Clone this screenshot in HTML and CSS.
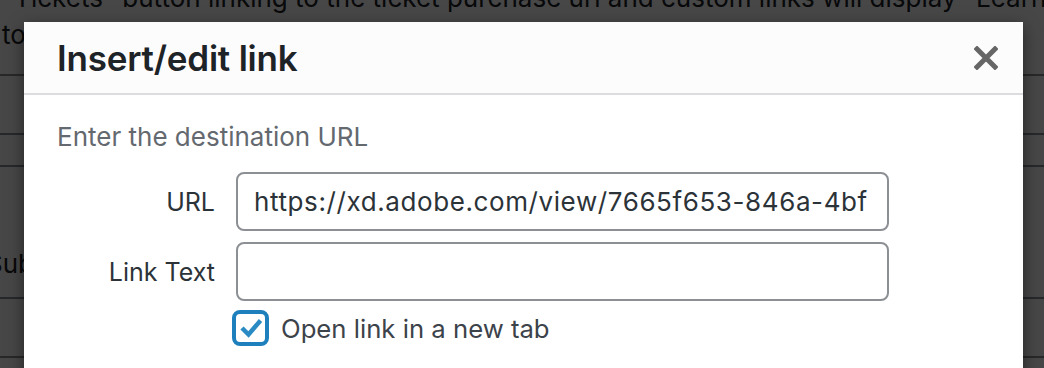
FILE: index.html
```html
<!DOCTYPE html>
<html lang="en">
<head>
    <meta charset="UTF-8">
    <meta name="viewport" content="width=device-width, initial-scale=1.0">
    <title>Insert/edit link</title>
    <link rel="stylesheet" href="styles.css">
</head>
<body>
    <div class="page">
        <div class="page-row first">
            <p class="page-text">"Tickets" button linking to the ticket purchase url and custom links will display "Learn More" buttons linking</p>
            <p class="page-text">to</p>
        </div>
        <div class="page-row tall"></div>
        <div class="page-row short"></div>
        <div class="page-row big">
            <p class="page-text sub">Sub</p>
        </div>
        <div class="page-row tall"></div>
        <div class="page-row"></div>
    </div>

    <div class="overlay"></div>

    <div class="modal">
        <div class="modal-head">
            <h1 class="modal-title">Insert/edit link</h1>
            <button class="close" aria-label="Close">
                <svg width="24" height="24" viewBox="0 0 24 24">
                    <path d="M3 3 L21 21 M21 3 L3 21" stroke="#666" stroke-width="5" stroke-linecap="square"/>
                </svg>
            </button>
        </div>
        <div class="modal-body">
            <p class="hint">Enter the destination URL</p>
            <div class="fields">
                <label class="field-label" for="url">URL</label>
                <input class="field" type="text" id="url" value="https://xd.adobe.com/view/7665f653-846a-4bf">
                <label class="field-label" for="linkText">Link Text</label>
                <input class="field" type="text" id="linkText">
                <span></span>
                <label class="check">
                    <span class="check-box">
                        <svg width="26" height="26" viewBox="0 0 26 26">
                            <path d="M4 13 L10.5 19.5 L22.5 5.5" fill="none" stroke="#2a8bc4" stroke-width="4.5"/>
                        </svg>
                    </span>
                    Open link in a new tab
                </label>
            </div>
        </div>
    </div>
</body>
</html>
```

FILE: styles.css
```css
*{
    margin: 0;
    padding: 0;
    box-sizing: border-box;
}
body{
    width: 1044px;
    height: 368px;
    overflow: hidden;
    background: #fff;
    font-family: Inter, "Noto Sans", sans-serif;
    position: relative;
}
.page{
    margin-top: -21px;
}
.page-row{
    height: 59px;
    border-bottom: 2px solid #8a9096;
}
.page-row.first{
    height: 97px;
}
.page-row.short{
    height: 32px;
}
.page-row.big{
    height: 132px;
    padding-top: 78px;
}
.page-text{
    font-size: 26px;
    line-height: 37px;
    color: #1d2327;
    white-space: nowrap;
    padding-left: 2px;
}
.page-text.sub{
    margin-left: -16px;
}
.overlay{
    position: absolute;
    inset: 0;
    background: rgba(0, 0, 0, 0.72);
}
.modal{
    position: absolute;
    left: 24px;
    top: 22px;
    width: 999px;
    height: 400px;
    background: #fff;
    box-shadow: 0 5px 15px rgba(0, 0, 0, 0.5);
}
.modal-head{
    height: 73px;
    background: #fcfcfc;
    border-bottom: 2px solid #dcdcde;
    display: flex;
    align-items: center;
    justify-content: space-between;
    padding: 0 22px 0 33px;
}
.modal-title{
    font-size: 35px;
    font-weight: 600;
    color: #1d2327;
    letter-spacing: -0.2px;
}
.close{
    border: none;
    background: none;
    width: 30px;
    height: 30px;
    display: flex;
    align-items: center;
    justify-content: center;
}
.modal-body{
    padding: 26px 33px 0;
}
.hint{
    font-size: 26px;
    line-height: 32px;
    color: #646970;
}
.fields{
    margin-top: 19px;
    display: grid;
    grid-template-columns: 158px 653px;
    column-gap: 21px;
    row-gap: 11px;
    align-items: center;
}
.field-label{
    text-align: right;
    font-size: 25px;
    color: #2c3338;
}
.field{
    height: 59px;
    border: 2px solid #8c8f94;
    border-radius: 8px;
    padding: 0 16px;
    font-family: inherit;
    font-size: 26px;
    letter-spacing: 0.6px;
    color: #2c3338;
    outline: none;
}
.check{
    display: flex;
    align-items: center;
    gap: 12px;
    margin-left: -4px;
    margin-top: -2px;
    font-size: 25.7px;
    color: #3c434a;
}
.check-box{
    width: 37px;
    height: 36px;
    border: 4px solid #1e7fbd;
    border-radius: 8px;
    display: flex;
    align-items: center;
    justify-content: center;
}
```
